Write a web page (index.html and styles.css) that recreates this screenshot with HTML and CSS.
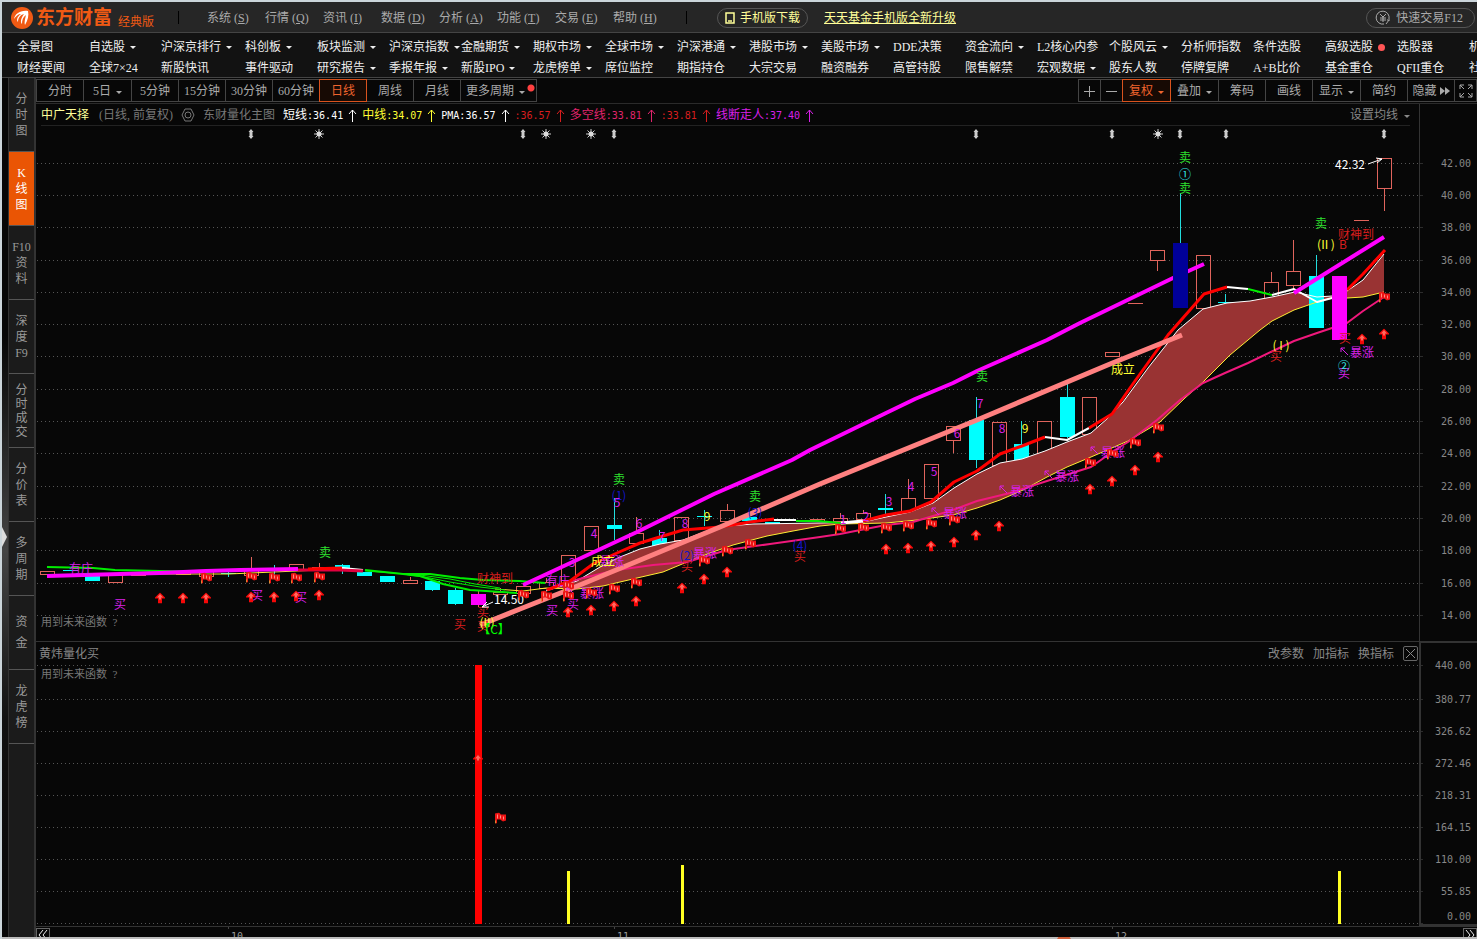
FILE: index.html
```
<!DOCTYPE html>
<html lang="zh-CN">
<head>
    <meta charset="UTF-8">
    <meta name="viewport" content="width=device-width, initial-scale=1.0">
    <title>东方财富 经典版</title>
    <link rel="stylesheet" href="styles.css">
</head>
<body>
    <svg width="0" height="0" class="defs">
        <symbol id="up" viewBox="0 0 10 11"><path d="M5 0 L10 5 V6 H7 V11 H3 V6 H0 V5 Z" fill="#f40808"/><path d="M5 1.500 L8 5 H6 V7 H4 V5 H2 Z" fill="#ff6a60"/></symbol>
        <symbol id="flag" viewBox="0 0 12 11"><path d="M1 1 L5 0 L7 2 H12 V8 L9 9 L6 7 H3 V11 H1 Z" fill="#ee1414"/><path d="M3 2 H4 V6 H3 Z M6 3 H7 V6 H6 Z M9 4 H10 V7 H9 Z" fill="#ff8a80"/><path d="M1 8 H2 V11 H1 Z" fill="#d89030"/></symbol>
        <symbol id="diamond" viewBox="0 0 7 10"><path d="M3.500 0 L6 3 H5 V7 H6 L3.500 10 L1 7 H2 V3 H1 Z" fill="#ccc"/></symbol>
        <symbol id="star" viewBox="0 0 10 10"><path d="M5 0 V10 M0 5 H10 M1.500 1.500 L8.500 8.500 M8.500 1.500 L1.500 8.500" stroke="#ccc"/><circle cx="5" cy="5" r="2.500" fill="#ddd"/></symbol>
        <symbol id="trend" viewBox="0 0 9 13"><path d="M4.500 13 V1 M1 5 L4.500 1 L8 5" fill="none" stroke="currentColor"/></symbol>
    </svg>

    <header class="topbar">
        <svg class="logo" viewBox="0 0 22 22"><circle cx="11" cy="11" r="11" fill="#f05a14"/><path d="M3 12 C4 7 9 3 17 4 C18 8 17 13 14 18 C13 16 14 12 15 8 C12 10 11 13 11 17 C9 15 10 11 13 7 C9 8 7 11 7 15 C5 13 6 10 10 7 C7 7 5 9 3 12 Z" fill="#fff"/></svg>
        <span class="brand">东方财富</span>
        <span class="edition">经典版</span>
        <i class="sep"></i>
        <nav class="menu">
            <button>系统 (<u>S</u>)</button>
            <button>行情 (<u>Q</u>)</button>
            <button>资讯 (<u>I</u>)</button>
            <button>数据 (<u>D</u>)</button>
            <button>分析 (<u>A</u>)</button>
            <button>功能 (<u>T</u>)</button>
            <button>交易 (<u>E</u>)</button>
            <button>帮助 (<u>H</u>)</button>
        </nav>
        <i class="sep"></i>
        <button class="pill pale"><svg width="10" height="12" viewBox="0 0 10 12"><path d="M1 1 H9 V11 H1 Z M3 9 H7" fill="none" stroke="currentColor" stroke-width="1.500"/></svg>手机版下载</button>
        <a class="promo" href="#">天天基金手机版全新升级</a>
        <button class="pill trade"><svg width="16" height="16" viewBox="0 0 16 16"><path d="M14 9 A6.500 6.500 0 1 0 9 14 M5 4 L8 7 L11 4 M5 8 H11 M5 10 H11 M8 7 V12 M11 14 L14 10 M12 10 H15" fill="none" stroke="currentColor"/></svg>快速交易F12</button>
    </header>

    <nav class="links">
        <a href="#">全景图</a><a href="#" class="more">自选股</a><a href="#" class="more">沪深京排行</a><a href="#" class="more">科创板</a><a href="#" class="more">板块监测</a><a href="#" class="more">沪深京指数</a><a href="#" class="more">金融期货</a><a href="#" class="more">期权市场</a><a href="#" class="more">全球市场</a><a href="#" class="more">沪深港通</a><a href="#" class="more">港股市场</a><a href="#" class="more">美股市场</a><a href="#">DDE决策</a><a href="#" class="more">资金流向</a><a href="#">L2核心内参</a><a href="#" class="more">个股风云</a><a href="#">分析师指数</a><a href="#">条件选股</a><a href="#" class="hot">高级选股</a><a href="#">选股器</a><a href="#">机构</a>
        <a href="#">财经要闻</a><a href="#">全球7×24</a><a href="#">新股快讯</a><a href="#">事件驱动</a><a href="#" class="more">研究报告</a><a href="#" class="more">季报年报</a><a href="#" class="more">新股IPO</a><a href="#" class="more">龙虎榜单</a><a href="#">席位监控</a><a href="#">期指持仓</a><a href="#">大宗交易</a><a href="#">融资融券</a><a href="#">高管持股</a><a href="#">限售解禁</a><a href="#" class="more">宏观数据</a><a href="#">股东人数</a><a href="#">停牌复牌</a><a href="#">A+B比价</a><a href="#">基金重仓</a><a href="#">QFII重仓</a><a href="#">社保</a>
    </nav>

    <div class="workspace">
        <div class="handle"><svg width="5" height="20" viewBox="0 0 5 20"><path d="M0 0 L5 10 L0 20 Z" fill="#ddd"/></svg></div>
        <aside class="side">
            <button>分<br>时<br>图</button>
            <button class="on">K<br>线<br>图</button>
            <button>F10<br>资<br>料</button>
            <button>深<br>度<br>F9</button>
            <button class="tight">分<br>时<br>成<br>交</button>
            <button>分<br>价<br>表</button>
            <button>多<br>周<br>期</button>
            <button class="loose">资<br>金</button>
            <button>龙<br>虎<br>榜</button>
        </aside>

        <main class="panel">
            <div class="toolbar">
                <div class="group">
                    <button>分时</button><button class="more">5日</button><button>5分钟</button><button>15分钟</button><button>30分钟</button><button>60分钟</button><button class="on">日线</button><button>周线</button><button>月线</button><button class="more wide">更多周期</button>
                </div>
                <div class="group">
                    <button class="icon" aria-label="放大"><svg width="11" height="11" viewBox="0 0 11 11"><path d="M5.500 0 V11 M0 5.500 H11" stroke="currentColor"/></svg></button>
                    <button class="icon" aria-label="缩小"><svg width="11" height="11" viewBox="0 0 11 11"><path d="M0 5.500 H11" stroke="currentColor"/></svg></button>
                    <button class="more on">复权</button><button class="more">叠加</button><button>筹码</button><button>画线</button><button class="more">显示</button><button>简约</button><button class="fold">隐藏<svg width="10" height="8" viewBox="0 0 10 8"><path d="M0 0 L5 4 L0 8 Z M5 0 L10 4 L5 8 Z" fill="currentColor"/></svg></button>
                    <button class="icon" aria-label="全屏"><svg width="14" height="14" viewBox="0 0 14 14"><path d="M1 5 V1 H5 M9 1 H13 V5 M13 9 V13 H9 M5 13 H1 V9 M1 1 L5 5 M13 1 L9 5 M13 13 L9 9 M1 13 L5 9" fill="none" stroke="currentColor"/></svg></button>
                </div>
            </div>

            <div class="chart-head">
                <div class="info">
                    <span class="name">中广天择</span>
                    <span class="dim">(日线, 前复权)</span>
                    <svg class="dim" width="14" height="14" viewBox="0 0 14 14"><path d="M4 1 H10 L13 7 L10 13 H4 L1 7 Z" fill="none" stroke="currentColor"/><circle cx="7" cy="7" r="3" fill="none" stroke="currentColor"/></svg>
                    <span class="dim">东财量化主图</span>
                    <span class="quote white">短线<b>:36.41</b><svg><use href="#trend"/></svg></span>
                    <span class="quote yellow">中线<b>:34.07</b><svg><use href="#trend"/></svg></span>
                    <span class="quote white"><b>PMA:36.57</b><svg><use href="#trend"/></svg></span>
                    <span class="quote red"><b>:36.57</b><svg><use href="#trend"/></svg></span>
                    <span class="quote pink">多空线<b>:33.81</b><svg><use href="#trend"/></svg></span>
                    <span class="quote red"><b>:33.81</b><svg><use href="#trend"/></svg></span>
                    <span class="quote magenta">线断走人<b>:37.40</b><svg><use href="#trend"/></svg></span>
                    <button class="more average">设置均线</button>
                </div>
                <div class="gutter"></div>
            </div>
            <svg class="chart" id="kline" viewBox="36 126 1441 515"></svg>

            <div class="chart-head sub">
                <div class="info">
                    <span>黄炜量化买</span>
                    <div class="actions">
                        <button>改参数</button><button>加指标</button><button>换指标</button>
                        <button class="close" aria-label="关闭"><svg width="9" height="9" viewBox="0 0 9 9"><path d="M0 0 L9 9 M9 0 L0 9" stroke="currentColor"/></svg></button>
                    </div>
                </div>
                <div class="gutter"></div>
            </div>
            <svg class="chart" id="signal" viewBox="36 664 1441 262"></svg>

            <div class="timeline">
                <button aria-label="向前"><svg width="10" height="10" viewBox="0 0 10 10"><path d="M5 0 L1 5 L5 10 M9 0 L5 5 L9 10" fill="none" stroke="currentColor"/></svg></button>
                <svg viewBox="50 927 1413 10">
                    <path d="M228.500 927 V929 M614.500 927 V929 M1112.500 927 V929" stroke="#444"/>
                    <text x="231" y="940">10</text>
                    <text x="617" y="940">11</text>
                    <text x="1115" y="940">12</text>
                </svg>
                <button aria-label="向后"><svg width="10" height="10" viewBox="0 0 10 10"><path d="M1 0 L5 5 L1 10 M5 0 L9 5 L5 10" fill="none" stroke="currentColor"/></svg></button>
            </div>
        </main>
    </div>
    <footer class="edge"></footer>

    <script>
        const NS = "http://www.w3.org/2000/svg";
        const kline = document.getElementById("kline");
        const signal = document.getElementById("signal");

        function add(parent, tag, attrs, content) {
            const el = document.createElementNS(NS, tag);
            for (const key in attrs) {
                el.setAttribute(key, attrs[key]);
            }
            if (content) {
                el.textContent = content;
            }
            parent.appendChild(el);
            return el;
        }

        function icon(parent, id, x, y, w, h) {
            add(parent, "use", { href: "#" + id, x: x - w / 2, y: y - h / 2, width: w, height: h });
        }

        function axis(parent, rows) {
            rows.forEach(([y, value, labelY]) => {
                add(parent, "path", { d: `M37 ${y}.5 H1419`, class: "grid" });
                add(parent, "path", { d: `M1420 ${y}.5 H1423`, stroke: "#2c2c2c" });
                add(parent, "text", { x: 1471, y: labelY || y, class: "tick" }, value);
            });
        }

        // price axis
        const levels = [163, 195, 227, 260, 292, 324, 356, 389, 421, 453, 486, 518, 550, 583, 615];
        axis(kline, levels.map((y, i) => [y, (42 - i * 2).toFixed(2)]));
        add(kline, "path", { d: "M1419.5 126 V641", stroke: "#333" });

        // band between the short and middle averages
        const upper = "546,591 577,581 600,567 620,557 640,549 660,544 683,540 707,531 727,526 753,524 820,523 863,522 886,517 910,512 933,503 954,488 977,474 1000,463 1022,459 1045,451 1067,442 1091,433 1108,418 1123,402 1148,368 1178,330 1203,309 1227,303 1250,301 1272,297 1295,292 1317,297 1332,296 1347,291 1363,280 1384,254";
        const lower = "546,588 577,589 603,586 637,578 663,572 687,562 710,553 733,545 767,536 793,531 820,526 840,524 886,523 917,520 953,515 977,508 1000,500 1023,490 1047,477 1067,467 1091,457 1128,441 1160,422 1185,398 1203,382 1230,355 1260,330 1272,321 1294,310 1317,302 1332,298 1347,298 1363,297 1384,292";

        // index, kind, body top, body bottom, high, low
        const candles = [
            [0, "up", 571, 574], [1, "down", 570, 571], [2, "down", 576, 581], [3, "up", 575, 582], [4, "up", 573, 575],
            [6, "up", 571, 574], [7, "up", 571, 576], [8, "down", 573, 574, 571, 577], [9, "up", 570, 575, 557, 575],
            [10, "down", 570, 571, 565, 575], [11, "up", 564, 569], [12, "up", 567, 570, 563, 570], [13, "down", 565, 568, 564, 574],
            [14, "down", 572, 576], [15, "down", 576, 582], [16, "up", 580, 583, 577, 583], [17, "down", 581, 590, 581, 591],
            [18, "down", 590, 604, 588, 605], [19, "mag", 594, 605, 590, 607], [20, "up", 592, 594, 588, 594], [21, "up", 586, 593],
            [22, "up", 582, 588, 578, 588], [23, "up", 555, 583], [24, "up", 526, 550], [25, "down", 525, 529, 498, 540],
            [26, "up", 533, 543, 517, 543], [27, "down", 538, 546, 530, 546], [28, "up", 517, 540], [29, "down", 516, 517, 510, 526],
            [30, "up", 510, 521, 504, 521], [31, "down", 517, 521, 515, 521], [32, "down", 522, 524], [34, "up", 519, 521],
            [35, "up", 518, 521, 513, 521], [36, "up", 513, 519, 510, 519], [37, "down", 508, 510, 494, 515], [38, "up", 498, 511, 479, 511],
            [39, "up", 464, 498], [40, "up", 426, 440, 426, 453], [41, "down", 420, 460, 397, 468], [42, "up", 422, 465],
            [43, "down", 444, 460, 421, 460], [44, "up", 421, 453], [45, "down", 397, 437, 384, 438], [46, "up", 397, 434],
            [47, "up", 352, 356], [48, "up", 303, 303], [49, "up", 250, 260, 250, 271], [50, "navy", 243, 308, 193, 308],
            [51, "up", 255, 308], [52, "down", 302, 303, 294, 303], [54, "up", 282, 298, 272, 298], [55, "up", 271, 285, 240, 289],
            [56, "down", 276, 328, 255, 328], [57, "mag", 276, 340], [58, "up", 220, 220], [59, "up", 158, 188, 158, 211]
        ];
        const late = 56;

        function drawCandle([i, kind, top, bottom, high, low]) {
            const x = Math.round(47 + i * 22.66);
            const g = add(kline, "g", { class: "candle " + kind });
            if (high) {
                if (kind === "up") {
                    add(g, "path", { d: `M${x}.5 ${high} V${top} M${x}.5 ${bottom} V${low}` });
                } else {
                    add(g, "path", { d: `M${x}.5 ${high} V${low}` });
                }
            }
            if (kind === "up") {
                add(g, "rect", { x: x - 6.5, y: top + 0.5, width: 14, height: bottom - top });
            } else {
                add(g, "rect", { x: x - 7, y: top, width: 15, height: Math.max(1, bottom - top) });
            }
            if (kind === "up" && top === bottom) {
                add(g, "path", { d: `M${x - 7} ${top}.5 H${x + 8}` });
            }
        }

        candles.filter(c => c[0] < late).forEach(drawCandle);
        add(kline, "polygon", { points: upper + " " + lower.split(" ").reverse().join(" "), fill: "#993333" });
        candles.filter(c => c[0] === late).forEach(drawCandle);

        // colour, width, points
        const lines = [
            ["#fff", 1, upper],
            ["#ffee33", 1, "160,574 228,574 297,571 342,569"],
            ["#ffee33", 1, "495,589 523,591 " + lower],
            ["#f0187c", 2, "568,582 583,578 617,570 653,565 687,562 727,550 770,544 820,537 840,534 886,525 913,522 953,510 977,501 1010,493 1047,481 1091,467 1115,450 1128,442 1157,420 1180,400 1203,383 1225,373 1248,363 1273,351 1294,341 1317,333 1332,328 1347,323 1363,311 1384,297"],
            ["#00ee00", 2, "47,567 93,568 115,570 160,571 206,572"],
            ["#00ee00", 2, "365,570 403,574 430,574 460,578 483,580 520,581 545,583"],
            ["#00ee00", 1, "365,571 420,575 450,579 475,584 500,588"],
            ["#00ee00", 1, "403,574 430,578 450,582 480,587 505,590"],
            ["#00ee00", 2, "403,574 420,576 443,584 470,590 517,593"],
            ["#fff", 2, "342,568 363,570"],
            ["#e00040", 3, "297,570 340,570 363,571"],
            ["#ff0000", 3, "308,569 342,568"],
            ["#ff00ff", 4, "47,576 120,574 160,573 206,571 240,570 298,569"],
            ["#ff0000", 3, "547,590 570,581 593,564 617,553 640,543 663,536 683,530 720,527 750,522 774,519"],
            ["#fff", 2, "774,520 796,520"],
            ["#00ee00", 2, "796,521 818,521 841,523"],
            ["#fff", 3, "841,523 863,521"],
            ["#ff0000", 3, "863,521 886,515 910,511 931,502 954,482 977,471 1000,454 1022,446 1045,437"],
            ["#fff", 2, "1045,437 1067,440 1089,428"],
            ["#ff0000", 3, "1089,428 1112,414 1130,388 1168,335 1204,294 1227,287"],
            ["#fff", 2, "1227,287 1248,289"],
            ["#00ee00", 2, "1248,289 1272,295"],
            ["#fff", 2, "1272,295 1294,289 1317,302 1332,298 1347,290"],
            ["#ff0000", 3, "1347,290 1363,274 1385,250"],
            ["#ff00ff", 4, "523,585 637,532 714,494 792,460 810,450 886,413 915,399 953,383 977,371 1047,340 1080,323 1142,293 1173,278 1204,264"],
            ["#ff8080", 5, "480,625 520,609 563,592 720,527 820,484 977,420 1110,364 1182,335"],
            ["#ff00ff", 4, "1294,293 1384,237"]
        ];
        lines.forEach(([stroke, width, points]) => {
            add(kline, "polyline", { points: points, stroke: stroke, "stroke-width": width, class: "line" });
        });
        candles.filter(c => c[0] === 50 || c[0] > late).forEach(drawCandle);

        // colour class, x, y, text
        const labels = [
            ["green", 325, 552, "卖"], ["green", 619, 479, "卖"], ["green", 755, 496, "卖"], ["green", 982, 376, "卖"],
            ["green", 1185, 157, "卖"], ["green", 1185, 188, "卖"], ["green", 1321, 223, "卖"], ["cyan", 1185, 174, "①"],
            ["magenta", 81, 568, "有庄"], ["magenta", 120, 604, "买"], ["magenta", 257, 595, "买"], ["magenta", 301, 597, "买"],
            ["red", 460, 624, "买"], ["red", 483, 612, "买"], ["red", 483, 626, "买"], ["red", 495, 578, "财神到"],
            ["yellow", 487, 622, "(II)"], ["lime", 494, 629, "【C】"],
            ["magenta", 552, 610, "买"], ["magenta", 573, 604, "买"], ["magenta", 592, 593, "暴涨"], ["magenta", 558, 580, "有庄"],
            ["magenta", 572, 562, "3"], ["magenta", 594, 533, "4"], ["blue", 619, 495, "(1)"], ["magenta", 617, 502, "5"],
            ["magenta", 639, 523, "6"], ["magenta", 662, 536, "7"], ["magenta", 685, 523, "8"], ["yellow", 707, 516, "9"],
            ["blue", 755, 512, "(3)"], ["magenta", 612, 561, "暴涨"], ["yellow", 603, 561, "成立"], ["blue", 687, 555, "(2)"],
            ["magenta", 705, 553, "暴涨"], ["red", 687, 566, "买"], ["blue", 800, 545, "(4)"], ["red", 800, 556, "买"],
            ["magenta", 843, 519, "1"], ["magenta", 866, 516, "2"], ["magenta", 889, 501, "3"], ["magenta", 911, 486, "4"],
            ["magenta", 934, 471, "5"], ["magenta", 957, 433, "6"], ["magenta", 980, 403, "7"], ["magenta", 1002, 428, "8"],
            ["yellow", 1025, 428, "9"], ["magenta", 955, 513, "暴涨"], ["magenta", 1022, 491, "暴涨"], ["magenta", 1067, 476, "暴涨"],
            ["magenta", 1113, 452, "暴涨"], ["yellow", 1123, 369, "成立"], ["yellow", 1326, 244, "(II )"], ["red", 1343, 244, "B"],
            ["red", 1356, 234, "财神到"], ["yellow", 1281, 345, "( I )"], ["red", 1276, 356, "买"], ["red", 1345, 338, "买"],
            ["magenta", 1362, 352, "暴涨"], ["magenta", 1344, 373, "买"], ["cyan", 1344, 366, "②"],
            ["white", 509, 599, "14.50"], ["white", 1350, 164, "42.32"]
        ];
        labels.forEach(([color, x, y, text]) => {
            add(kline, "text", { x: x, y: y - 1, class: "mark " + color }, text);
        });

        // small pointers next to the surge labels
        [[935, 511], [1003, 489], [1048, 474], [1094, 450], [570, 590], [1344, 351]].forEach(([x, y]) => {
            add(kline, "path", { d: `M${x + 4} ${y + 4} L${x - 3} ${y - 3} M${x - 3} ${y + 1} V${y - 3} H${x + 1}`, class: "pointer magenta" });
        });
        add(kline, "path", { d: "M493 602 L482 607 M487 602 L482 607 L489 607", class: "pointer white" });
        add(kline, "path", { d: "M1368 164 L1382 159 M1376 158 L1382 159 L1377 163", class: "pointer white" });

        const arrows = [
            [160, 598], [183, 598], [206, 598], [251, 597], [274, 597], [296, 596], [319, 595], [568, 612], [591, 610],
            [614, 606], [636, 601], [682, 588], [704, 579], [727, 572], [886, 549], [908, 548], [931, 546], [954, 542],
            [976, 535], [999, 526], [1090, 489], [1112, 481], [1135, 470], [1158, 457], [1362, 339], [1384, 334]
        ];
        arrows.forEach(([x, y]) => icon(kline, "up", x, y, 10, 11));

        const flags = [
            [206, 578], [251, 577], [274, 578], [296, 578], [319, 577], [523, 595], [546, 596], [568, 586], [568, 596],
            [591, 593], [614, 589], [636, 583], [704, 561], [727, 551], [750, 544], [840, 529], [863, 528], [886, 528],
            [908, 526], [931, 524], [954, 520], [1090, 463], [1112, 454], [1135, 443], [1158, 428], [1384, 297]
        ];
        flags.forEach(([x, y]) => icon(kline, "flag", x, y, 12, 11));

        [251, 523, 614, 976, 1112, 1180, 1226, 1384].forEach(x => icon(kline, "diamond", x, 134, 7, 10));
        [319, 546, 591, 1158].forEach(x => icon(kline, "star", x, 134, 10, 10));
        add(kline, "text", { x: 41, y: 622, class: "note" }, "用到未来函数  ?");

        // signal panel
        axis(signal, [
            [665, "440.00"], [699, "380.77"], [731, "326.62"], [763, "272.46"], [795, "218.31"],
            [827, "164.15"], [859, "110.00"], [891, "55.85"], [923, "0.00", 916]
        ]);
        add(signal, "path", { d: "M1420 664 V925 H1477", fill: "none", stroke: "#333", "stroke-width": 2 });
        add(signal, "rect", { x: 475, y: 665, width: 7, height: 259, fill: "#f00" });
        [[567, 871], [681, 865], [1338, 871]].forEach(([x, y]) => {
            add(signal, "rect", { x: x, y: y, width: 3, height: 924 - y, fill: "#ffff22" });
        });
        icon(signal, "up", 478, 759, 10, 11);
        icon(signal, "flag", 500, 818, 12, 11);
        add(signal, "text", { x: 41, y: 674, class: "note" }, "用到未来函数  ?");
    </script>
</body>
</html>
```
FILE: styles.css
```
* {
    box-sizing: border-box;
}

body {
    margin: 0;
    min-height: 100vh;
    display: flex;
    flex-direction: column;
    border-top: 2px solid #cbd5da;
    border-left: 2px solid #cbd5da;
    background-color: #070707;
    color: #aaa;
    font-family: "Liberation Serif", "Noto Sans CJK SC", sans-serif;
    font-size: 12px;
    line-height: 16px;
    overflow-x: hidden;
}

button {
    background: none;
    border: 0;
    padding: 0;
    margin: 0;
    color: inherit;
    font: inherit;
    cursor: pointer;
    white-space: nowrap;
}

a {
    color: inherit;
    text-decoration: none;
    white-space: nowrap;
}

.defs {
    position: absolute;
}

/* small triangle after anything that opens a list */
.more::after {
    content: "";
    display: inline-block;
    margin-left: 6px;
    border: 3px solid transparent;
    border-top-color: currentColor;
    border-bottom: 0;
    vertical-align: middle;
}

/* top bar */
.topbar {
    display: flex;
    align-items: center;
    height: 31px;
    padding: 1px 2px 0 9px;
    background-color: #262626;
    border-bottom: 1px solid #444;
}

.logo {
    width: 22px;
    height: 22px;
    margin-right: 3px;
}

.brand {
    color: #f05a14;
    font-size: 19px;
    font-weight: bold;
}

.edition {
    align-self: flex-end;
    margin: 0 24px 2px 6px;
    color: #f05a14;
}

.sep {
    width: 1px;
    height: 13px;
    background-color: #000;
}

.menu {
    display: flex;
    margin: 0 15px 0 28px;
}

.menu button {
    width: 58px;
    text-align: left;
}

.pill {
    display: flex;
    align-items: center;
    justify-content: center;
    gap: 5px;
    height: 20px;
    padding: 0 7px;
    border: 1px solid #555;
    border-radius: 10px;
}

.pale {
    margin: 0 16px 0 30px;
}

.pale,
.promo {
    color: #ffff99;
}

.promo {
    text-decoration: underline;
}

.trade {
    margin-left: auto;
    padding: 0 11px 0 8px;
}

/* shortcuts */
.links {
    display: grid;
    grid-template-columns: 72px 72px 84px repeat(18, 72px);
    grid-auto-rows: 21px;
    align-items: center;
    height: 45px;
    padding: 3px 0 0 15px;
    overflow: hidden;
    background-color: #121212;
    border-bottom: 1px solid #444;
    color: #eee;
}

.links .more::after {
    margin-left: 5px;
}

.links .hot::after {
    content: "";
    display: inline-block;
    width: 7px;
    height: 7px;
    margin-left: 5px;
    border-radius: 50%;
    background-color: #ff5555;
}

/* body of the window */
.workspace {
    display: flex;
    flex: 1;
}

.handle {
    display: flex;
    flex-direction: column;
    justify-content: center;
    width: 6px;
    padding-top: 58px;
    background: linear-gradient(#070707 30%, #444 55%, #111 75%, #070707);
}

.side {
    width: 28px;
    display: flex;
    flex-direction: column;
    background-color: #1b1b1b;
    border-left: 1px solid #333;
    border-right: 2px solid #333;
}

.side button {
    height: 74px;
    padding-top: 1px;
    border-bottom: 1px solid #555;
    color: #999;
}

.side .on {
    background-color: #ea5504;
    color: #fff;
}

.side .tight {
    line-height: 14px;
}

.side .loose {
    line-height: 21px;
}

.panel {
    flex: 1;
    min-width: 0;
    display: flex;
    flex-direction: column;
}

.toolbar {
    display: flex;
    justify-content: space-between;
    height: 26px;
    padding: 1px 0;
    border-bottom: 1px solid #2a2a2a;
}

.group {
    display: flex;
}

.group button {
    min-width: 48px;
    margin-right: -1px;
    padding-top: 1px;
    border: 1px solid #444;
}

.group + .group {
    margin-right: 1px;
}

.group .icon,
.group .fold {
    display: flex;
    align-items: center;
    justify-content: center;
    gap: 3px;
}

.group .icon {
    min-width: 23px;
}

.group .more {
    min-width: 49px;
}

.group .more::after {
    margin-left: 5px;
}

.group .on {
    z-index: 1;
    border-color: #d9531e;
    color: #f0642d;
    background-color: #170a04;
}

.group .wide {
    width: 77px;
    padding-right: 6px;
    background: radial-gradient(circle at 70px 8px, #ff4040 3px, transparent 4px);
}

.chart-head {
    display: flex;
    height: 22px;
}

.info {
    flex: 1;
    display: flex;
    align-items: center;
    gap: 6px;
    margin: 0 9px 0 5px;
    padding-top: 1px;
    border-bottom: 1px solid #222;
    white-space: nowrap;
}

.gutter {
    width: 58px;
    border-left: 1px solid #333;
}

.name {
    color: #ffff99;
    margin-right: 4px;
}

.dim {
    color: #777;
    margin-right: 2px;
}

.quote {
    display: flex;
    align-items: center;
}

.quote b {
    font: 10px "DejaVu Sans Mono", monospace;
}

.quote svg {
    width: 9px;
    height: 13px;
    margin: 0 -1px 0 5px;
}

.average {
    margin-left: auto;
    color: #888;
}

.sub {
    height: 23px;
    border-top: 1px solid #333;
}

.sub .info {
    margin: 0 1px 0 3px;
    border: 0;
    color: #888;
}

.sub .gutter {
    border-left-width: 2px;
    border-top: 1px solid #333;
}

.actions {
    display: flex;
    align-items: center;
    gap: 9px;
    margin-left: auto;
}

.close {
    display: flex;
    align-items: center;
    justify-content: center;
    width: 15px;
    height: 15px;
    border: 1px solid #666;
    border-radius: 2px;
}

/* charts */
.chart {
    display: block;
    width: 100%;
    overflow: visible;
}

.grid {
    stroke: #555;
    stroke-dasharray: 1 3;
}

.line {
    fill: none;
    stroke-linejoin: round;
}

.tick {
    fill: #888;
    font: 10px "DejaVu Sans Mono", monospace;
    text-anchor: end;
    dominant-baseline: central;
}

.mark {
    fill: currentColor;
    font-family: "Noto Sans CJK SC", sans-serif;
    text-anchor: middle;
    dominant-baseline: central;
}

.note {
    fill: #777;
    font-size: 11px;
    dominant-baseline: central;
    white-space: pre;
}

.pointer {
    fill: none;
    stroke: currentColor;
}

.candle {
    shape-rendering: crispEdges;
}

.up {
    fill: none;
    stroke: #e0645c;
}

.down {
    fill: #00ffff;
}

.down path,
.navy path {
    stroke: #22dddd;
}

.navy {
    fill: #000099;
}

.mag {
    fill: #ff00ff;
}

.mag path {
    stroke: #e0645c;
}

.white {
    color: #fff;
}

.yellow {
    color: #ffff33;
}

.red {
    color: #d81e1e;
}

.pink {
    color: #e0246c;
}

.magenta {
    color: #d820e8;
}

.green {
    color: #2ee02e;
}

.lime {
    color: #00ff00;
}

.cyan {
    color: #33e6e6;
}

.blue {
    color: #1414c8;
}

/* bottom scale */
.timeline {
    display: flex;
    align-items: flex-start;
    height: 11px;
    overflow: hidden;
    border-top: 1px solid #333;
}

.timeline button {
    width: 14px;
    height: 14px;
    margin-top: 1px;
    border: 1px solid #666;
    color: #eee;
    line-height: 10px;
}

.timeline > svg {
    flex: 1;
}

.timeline text {
    fill: #999;
    font: 10px "DejaVu Sans Mono", monospace;
}

.edge {
    height: 2px;
    background: radial-gradient(circle at 72% 5px, #d0603c 7px, #bbb 8px);
}
```
